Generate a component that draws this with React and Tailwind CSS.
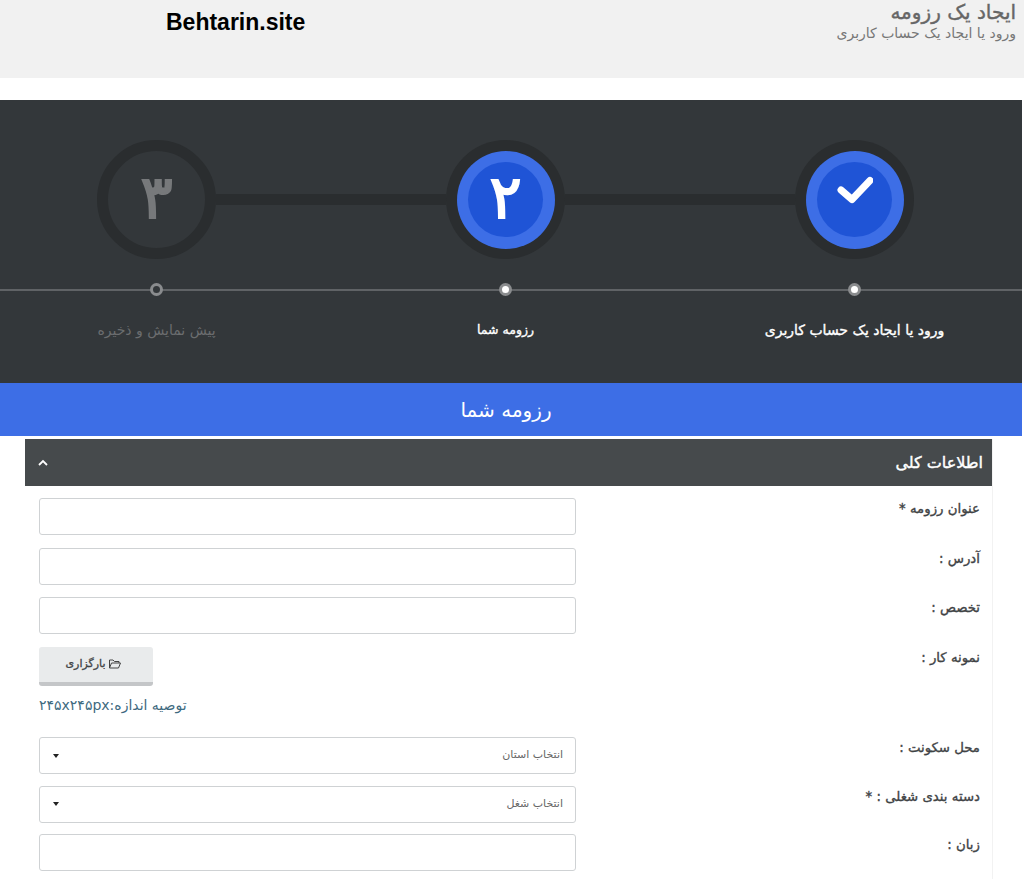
import React from "react";

const FONT = '"DejaVu Sans", "Noto Sans", sans-serif';

function Step({ state, children }) {
  if (state === "todo") {
    return (
      <div className="w-[119px] h-[119px] shrink-0 rounded-full border-[11px] border-[#2a2d2f] flex items-center justify-center">
        {children}
      </div>
    );
  }
  return (
    <div className="w-[119px] h-[119px] shrink-0 rounded-full bg-[#2a2d2f] flex items-center justify-center">
      <div className="w-[98px] h-[98px] rounded-full bg-[#3d6ee6] flex items-center justify-center">
        <div className="w-[75px] h-[75px] rounded-full bg-[#1f54d6] flex items-center justify-center">{children}</div>
      </div>
    </div>
  );
}

function Dot({ active }) {
  return (
    <div className="w-[119px] flex justify-center relative">
      <div className={"w-[13px] h-[13px] rounded-full border-[3px] border-[#8a8c8e] " + (active ? "bg-white" : "bg-[#33373a]")} />
    </div>
  );
}

function Row({ label, mb = "mb-[12.5px]", children }) {
  return (
    <div className={"flex justify-between pl-[14px] pr-[12px] " + mb}>
      <div className="w-[537px]">{children}</div>
      <div dir="rtl" className="text-[13.3px] [-webkit-text-stroke:0.35px] text-[#3f4345] pt-[1px] leading-[20px]">{label}</div>
    </div>
  );
}

const Input = () => <div className="h-[37px] bg-white border border-[#cfd2d4] rounded-[3px]" />;

function SelectBox({ text }) {
  return (
    <div className="h-[37px] bg-white border border-[#cfd2d4] rounded-[3px] flex items-center justify-between pl-[13px] pr-[12px]">
      <span className="w-0 h-0 border-x-[3.5px] border-x-transparent border-t-[4px] border-t-[#222]" />
      <span dir="rtl" className="text-[11px] text-[#666]">{text}</span>
    </div>
  );
}

export default function App() {
  return (
    <div className="w-[1024px] h-[879px] overflow-hidden bg-white" style={{ fontFamily: FONT }}>
      <header className="h-[78px] bg-[#f1f1f1] flex justify-between pl-[166px] pr-[8px]">
        <div className="text-[23px] font-bold text-black leading-[24px] pt-[10px]" style={{ fontFamily: '"Liberation Sans", sans-serif' }}>
          Behtarin.site
        </div>
        <div dir="rtl" className="pt-[2px]">
          <div className="text-[20px] [-webkit-text-stroke:0.4px] text-[#666] leading-[20px]">ایجاد یک رزومه</div>
          <div className="text-[14px] text-[#777] leading-[16px] mt-[3px]">ورود یا ایجاد یک حساب کاربری</div>
        </div>
      </header>

      <section className="mt-[22px] w-[1022px] h-[283px] bg-[#33373a] pt-[40px] flex flex-col">
        <div className="flex items-center pl-[97px] pr-[108px]">
          <Step state="todo">
            <span className="text-[60px] [-webkit-text-stroke:2px] text-[#77797b] leading-none -mt-[6px]">۳</span>
          </Step>
          <div className="flex-1 h-[11px] bg-[#2a2d2f]" />
          <Step state="current">
            <span className="text-[60px] [-webkit-text-stroke:2px] text-white leading-none -mt-[6px]">۲</span>
          </Step>
          <div className="flex-1 h-[11px] bg-[#2a2d2f]" />
          <Step state="done">
            <svg width="36" height="30" viewBox="0 0 36 30" className="-mt-[18px]">
              <path d="M4 14 L15 23.5 L33 4.5" fill="none" stroke="#fff" strokeWidth="7" strokeLinecap="round" strokeLinejoin="round" />
            </svg>
          </Step>
        </div>

        <div className="relative mt-[24px] flex justify-between pl-[97px] pr-[108px]">
          <div className="absolute left-0 right-0 top-[6px] h-[2px] bg-[#606366]" />
          <Dot />
          <Dot active />
          <Dot active />
        </div>

        <div className="mt-[24px] flex justify-between pl-[97px] pr-[108px] text-[14px] leading-[20px]">
          <div dir="rtl" className="w-[119px] flex justify-center whitespace-nowrap text-[#6b6d6f]">پیش نمایش و ذخیره</div>
          <div dir="rtl" className="w-[119px] flex justify-center whitespace-nowrap [-webkit-text-stroke:0.35px] text-white text-[12.5px]">رزومه شما</div>
          <div dir="rtl" className="w-[119px] flex justify-center whitespace-nowrap [-webkit-text-stroke:0.35px] text-white">ورود یا ایجاد یک حساب کاربری</div>
        </div>
      </section>

      <div dir="rtl" className="w-[1022px] h-[53px] bg-[#3d6ee6] flex items-center justify-center text-white text-[20px] pr-[10px]">
        رزومه شما
      </div>

      <section className="mt-[3px] ml-[25px] w-[968px] border-r border-[#f2f2f2] h-[440px]">
        <div className="h-[47px] bg-[#464a4c] flex items-center justify-between pl-[12px] pr-[9px]">
          <svg width="12" height="12" viewBox="0 0 12 12">
            <path d="M2 8 L6 4 L10 8" fill="none" stroke="#fff" strokeWidth="1.8" />
          </svg>
          <span dir="rtl" className="text-white [-webkit-text-stroke:0.4px] text-[16px]">اطلاعات کلی</span>
        </div>
        <div className="pt-[12px]">
          <Row label="عنوان رزومه *"><Input /></Row>
          <Row label="آدرس :"><Input /></Row>
          <Row label="تخصص :"><Input /></Row>
          <Row label="نمونه کار :" mb="mb-[22.5px]">
            <button className="w-[114px] h-[39px] bg-[#e9ebec] border-b-[4px] border-[#c4c6c8] rounded-[3px] flex items-center justify-center gap-[2px] text-[#3f4345] pr-[5px]">
              <span dir="rtl" className="text-[11px] [-webkit-text-stroke:0.3px]">بارگزاری</span>
              <svg width="14" height="12" viewBox="0 0 14 12" fill="none" stroke="#444" strokeWidth="1">
                <path d="M1.5 10 V2 H5 L6.5 3.5 H11 V5 M1.5 10 H10.5 L12.5 5 H3.5 L1.5 10" />
              </svg>
            </button>
            <div dir="rtl" className="mt-[9px] text-left text-[14px] leading-[20px] text-[#3e6a80]">
              <span dir="rtl">توصیه اندازه:۲۴۵x۲۴۵px</span>
            </div>
          </Row>
          <Row label="محل سکونت :" mb="mb-[11.5px]"><SelectBox text="انتخاب استان" /></Row>
          <Row label="دسته بندی شغلی : *" mb="mb-[11.5px]"><SelectBox text="انتخاب شغل" /></Row>
          <Row label="زبان :"><Input /></Row>
        </div>
      </section>
    </div>
  );
}
